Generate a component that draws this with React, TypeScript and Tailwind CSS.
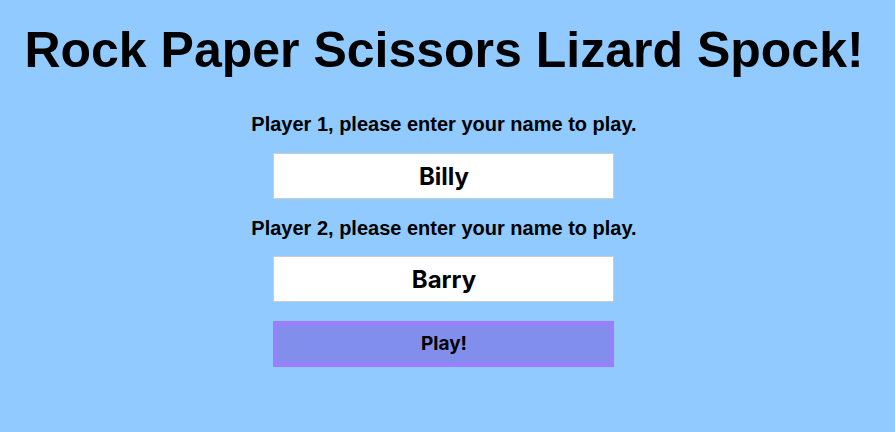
import { useState } from 'react';

const App = () => {
  const [player1, setPlayer1] = useState('Billy');
  const [player2, setPlayer2] = useState('Barry');

  return (
    <div className="min-h-[432px] w-full bg-[#90caff] pr-[7px] text-black font-['Liberation_Sans',Arial,sans-serif]">
      <div className="flex flex-col items-center pt-[25px]">
        <h1 className="text-[50px] font-bold leading-none whitespace-nowrap">
          Rock Paper Scissors Lizard Spock!
        </h1>
        <form
          className="mt-[39px] flex flex-col items-center gap-[19px]"
          onSubmit={(e) => e.preventDefault()}
        >
          <label htmlFor="player1" className="text-[20px] font-bold leading-none">
            Player 1, please enter your name to play.
          </label>
          <input
            id="player1"
            value={player1}
            onChange={(e) => setPlayer1(e.target.value)}
            className="h-[46px] w-[341px] border border-[#cccccc] bg-white text-center text-[24px] font-bold font-['Inter',sans-serif] outline-none"
          />
          <label htmlFor="player2" className="-mb-px text-[20px] font-bold leading-none">
            Player 2, please enter your name to play.
          </label>
          <input
            id="player2"
            value={player2}
            onChange={(e) => setPlayer2(e.target.value)}
            className="h-[46px] w-[341px] border border-[#cccccc] bg-white text-center text-[24px] font-bold font-['Inter',sans-serif] outline-none"
          />
          <button
            type="submit"
            className="h-[46px] w-[341px] border-[5px] border-[#9a7ffc] bg-[#818eeb] text-[19px] font-bold font-['Inter',sans-serif]"
          >
            Play!
          </button>
        </form>
      </div>
    </div>
  );
};

export default App;
